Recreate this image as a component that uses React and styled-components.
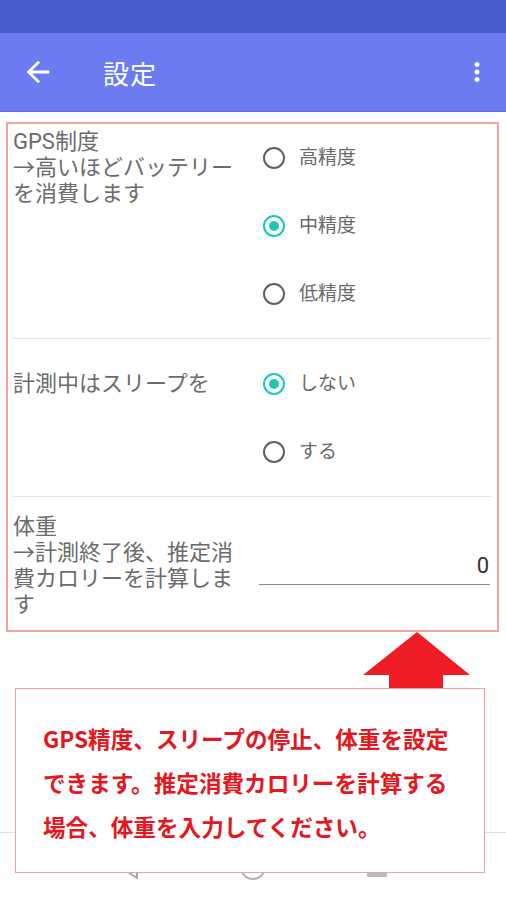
import React from "react";
import styled, { createGlobalStyle } from "styled-components";

const GlobalStyle = createGlobalStyle`
  html, body { margin: 0; padding: 0; background: #ffffff; }
  * { box-sizing: border-box; }
  body { font-family: Roboto, "Noto Sans CJK JP", "Noto Sans", sans-serif; }
`;

const Page = styled.div`
  position: relative;
  width: 506px;
  height: 900px;
  display: flex;
  flex-direction: column;
  overflow: hidden;
  background: #ffffff;
`;

const StatusBar = styled.div`
  height: 33px;
  flex: none;
  background: #485ccc;
`;

const AppBar = styled.header`
  height: 78px;
  flex: none;
  display: flex;
  align-items: center;
  background: #6c7cf0;
  box-shadow: 0 1px 0 #5e6ee4;
  padding-left: 21px;
  padding-right: 14px;
  color: #ffffff;
  position: relative;
  z-index: 1;
`;

const Title = styled.h1`
  margin: 0 0 0 48px;
  flex: 1;
  font-size: 26px;
  font-weight: 400;
  letter-spacing: 1px;
  color: #ffffff;
`;

const Content = styled.main`
  flex: 1;
  padding: 11px 7px 0 6px;
`;

const SettingsBox = styled.div`
  border: 2px solid #f4a3a3;
  padding: 0 5px;
`;

const Section = styled.section`
  display: grid;
  grid-template-columns: 232px 1fr;
  column-gap: 14px;
  padding: ${(p) => p.$pad};
  border-bottom: ${(p) => (p.$last ? "none" : "1px solid #e4e4e4")};
`;

const Label = styled.div`
  margin-top: ${(p) => p.$offset || 0}px;
  font-size: 22px;
  line-height: 26px;
  color: #6b6b6b;
`;

const RadioGroup = styled.div`
  display: flex;
  flex-direction: column;
`;

const RadioRow = styled.div`
  height: 68px;
  display: flex;
  align-items: center;
  padding-left: 4px;
`;

const RadioCircle = styled.span`
  width: 22px;
  height: 22px;
  flex: none;
  border-radius: 50%;
  border: 2.5px solid ${(p) => (p.$checked ? "#1ec9b1" : "#606060")};
  display: flex;
  align-items: center;
  justify-content: center;
  &::after {
    content: "";
    width: 10px;
    height: 10px;
    border-radius: 50%;
    background: ${(p) => (p.$checked ? "#1ec9b1" : "transparent")};
  }
`;

const RadioText = styled.span`
  margin-left: 14px;
  font-size: 19px;
  line-height: 26px;
  color: #696969;
`;

const WeightInput = styled.input`
  align-self: start;
  margin: 33px 2px 0 0;
  height: 38px;
  width: calc(100% - 2px);
  border: none;
  border-bottom: 1.5px solid #8a8a8a;
  background: transparent;
  outline: none;
  text-align: right;
  font-family: Roboto, "Noto Sans CJK JP", sans-serif;
  font-size: 22px;
  color: #333333;
  padding: 0 1px 0 0;
`;

const NavBar = styled.nav`
  height: 68px;
  flex: none;
  border-top: 1px solid #dedede;
  background: #ffffff;
  display: flex;
  align-items: center;
  justify-content: center;
  gap: 98px;
`;

const NavIcon = styled.svg`
  width: 26px;
  height: 26px;
  display: block;
`;

const Callout = styled.div`
  position: absolute;
  left: 15px;
  top: 688px;
  width: 470px;
  height: 185px;
  background: #ffffff;
  border: 1.5px solid #f4a0a0;
  padding: 28px 10px 0 27px;
  z-index: 3;
`;

const CalloutText = styled.p`
  margin: 0;
  font-family: "Noto Sans CJK JP", sans-serif;
  font-size: 22.6px;
  line-height: 44px;
  font-weight: 700;
  color: #e5161d;
  white-space: nowrap;
`;

const ArrowSvg = styled.svg`
  position: absolute;
  left: 363px;
  top: 632px;
  width: 108px;
  height: 57px;
  z-index: 2;
`;

function Radio({ checked, children }) {
  return (
    <RadioRow>
      <RadioCircle $checked={checked} />
      <RadioText>{children}</RadioText>
    </RadioRow>
  );
}

export default function App() {
  return (
    <Page>
      <GlobalStyle />
      <StatusBar />
      <AppBar>
        <svg width="34" height="34" viewBox="0 0 24 24" fill="#ffffff">
          <path d="M20 11H7.83l5.59-5.59L12 4l-8 8 8 8 1.41-1.41L7.83 13H20v-2z" />
        </svg>
        <Title>設定</Title>
        <svg width="30" height="30" viewBox="0 0 24 24" fill="#ffffff">
          <path d="M12 8c1.1 0 2-.9 2-2s-.9-2-2-2-2 .9-2 2 .9 2 2 2zm0 2c-1.1 0-2 .9-2 2s.9 2 2 2 2-.9 2-2-.9-2-2-2zm0 6c-1.1 0-2 .9-2 2s.9 2 2 2 2-.9 2-2-.9-2-2-2z" />
        </svg>
      </AppBar>
      <Content>
        <SettingsBox>
          <Section $pad="0 0 10px">
            <Label $offset={5}>
              GPS制度
              <br />
              →高いほどバッテリーを消費します
            </Label>
            <RadioGroup>
              <Radio>高精度</Radio>
              <Radio checked>中精度</Radio>
              <Radio>低精度</Radio>
            </RadioGroup>
          </Section>
          <Section $pad="11px 0 10px">
            <Label $offset={21}>計測中はスリープを</Label>
            <RadioGroup>
              <Radio checked>しない</Radio>
              <Radio>する</Radio>
            </RadioGroup>
          </Section>
          <Section $pad="17px 0 12px" $last>
            <Label>
              体重
              <br />
              →計測終了後、推定消費カロリーを計算します
            </Label>
            <WeightInput readOnly value="0" />
          </Section>
        </SettingsBox>
      </Content>
      <NavBar>
        <NavIcon viewBox="0 0 26 26">
          <path d="M21 2 L4 13 L21 24 Z" fill="none" stroke="#a8a8a8" strokeWidth="2" strokeLinejoin="round" />
        </NavIcon>
        <NavIcon viewBox="0 0 26 26">
          <circle cx="13" cy="13" r="12" fill="none" stroke="#b4b4b4" strokeWidth="2" />
        </NavIcon>
        <NavIcon viewBox="0 0 26 26">
          <rect x="3" y="3" width="20" height="20" rx="1" fill="#bcbcbc" />
        </NavIcon>
      </NavBar>
      <ArrowSvg viewBox="0 0 108 57">
        <polygon points="54,0 107,43 80,43 80,57 26,57 26,43 0,43" fill="#ee1c25" />
      </ArrowSvg>
      <Callout>
        <CalloutText>
          GPS精度、スリープの停止、体重を設定
          <br />
          できます。推定消費カロリーを計算する
          <br />
          場合、体重を入力してください。
        </CalloutText>
      </Callout>
    </Page>
  );
}
